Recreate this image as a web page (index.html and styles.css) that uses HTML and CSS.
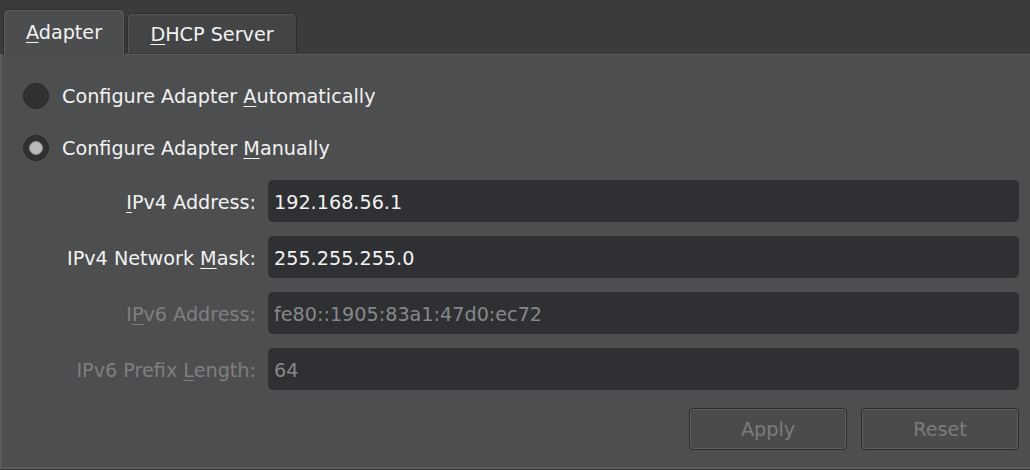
FILE: index.html
```html
<!DOCTYPE html>
<html>
<head>
<meta charset="utf-8">
<link rel="stylesheet" href="styles.css">
</head>
<body>
<div class="window">
  <div class="tabbar">
    <div class="tab active"><span><u>A</u>dapter</span></div>
    <div class="tab"><span><u>D</u>HCP Server</span></div>
  </div>
  <div class="panel">
    <div class="radio-row"><span class="radio"></span><span class="rlabel">Configure Adapter <u>A</u>utomatically</span></div>
    <div class="radio-row"><span class="radio checked"></span><span class="rlabel">Configure Adapter <u>M</u>anually</span></div>
    <div class="form">
      <label class="flabel"><span><u>I</u>Pv4 Address:</span></label>
      <div class="field"><span>192.168.56.1</span></div>
      <label class="flabel"><span>IPv4 Network <u>M</u>ask:</span></label>
      <div class="field"><span>255.255.255.0</span></div>
      <label class="flabel disabled"><span>I<u>P</u>v6 Address:</span></label>
      <div class="field disabled"><span>fe80::1905:83a1:47d0:ec72</span></div>
      <label class="flabel disabled"><span>IPv6 Prefix <u>L</u>ength:</span></label>
      <div class="field disabled"><span>64</span></div>
    </div>
    <div class="buttons">
      <div class="btn">Apply</div>
      <div class="btn">Reset</div>
    </div>
  </div>
</div>
</body>
</html>
```
FILE: styles.css
```css
* { box-sizing: border-box; }
html, body {
  margin: 0;
  padding: 0;
  background: #3a3b3d;
  width: 1030px;
  height: 470px;
  overflow: hidden;
}
body {
  font-family: "DejaVu Sans", Verdana, sans-serif;
  font-size: 19.2px;
  color: #f2f2f2;
}
u {
  text-decoration: underline;
  text-decoration-thickness: 1px;
  text-underline-offset: 3px;
}
.tabbar {
  height: 54px;
  display: flex;
  align-items: flex-end;
  padding-left: 3px;
  position: relative;
  z-index: 1;
}
.tab {
  height: 40px;
  padding: 2px 0 0;
  display: flex;
  align-items: center;
  background: #434446;
  border: 1px solid #2c2d2f;
  border-bottom: none;
  border-radius: 5px 5px 0 0;
  box-shadow: inset 1px 1px 0 #55565a;
  margin-bottom: 1px;
  width: 170px;
  justify-content: center;
}
.tab.active {
  height: 46px;
  width: 122px;
  margin-bottom: -1px;
  background: #4c4d4f;
  border-color: #2e2f31;
  box-shadow: inset 1px 1px 0 #5c5d60, inset -1px 0 0 #5c5d60;
  padding-top: 0;
  margin-right: 2px;
}
.panel {
  background: #4d4e50;
  border-top: 1px solid #5b5c5e;
  border-left: 2px solid #5a5b5d;
  border-bottom: 2px solid #5a5b5d;
  height: 415px;
  padding: 28px 11px 0 21px;
}
.radio-row {
  display: flex;
  align-items: center;
  height: 26px;
  gap: 13px;
  margin-bottom: 26px;
}
.radio {
  width: 26px;
  height: 26px;
  border-radius: 50%;
  background: #2f3032;
  border: 1px solid #29292b;
  display: flex;
  align-items: center;
  justify-content: center;
  flex: none;
}
.radio.checked::after {
  content: "";
  width: 12px;
  height: 12px;
  border-radius: 50%;
  background: #b9b9b9;
  border: 1px solid #8e8e8e;
}
.form {
  margin-top: -7px;
  display: grid;
  grid-template-columns: 233px 1fr;
  grid-auto-rows: 42px;
  column-gap: 12px;
  row-gap: 14px;
  align-items: stretch;
}
.flabel {
  height: 42px;
  display: flex;
  align-items: center;
  justify-content: flex-end;
  padding-top: 2px;
  white-space: nowrap;
}
.field {
  height: 42px;
  background: #2f3033;
  border-radius: 5px;
  padding-left: 6px;
  padding-top: 2px;
  display: flex;
  align-items: center;
}
.disabled {
  color: #7e7f80;
}
.field.disabled {
  color: #87888a;
}
.buttons {
  margin-top: 18px;
  display: flex;
  justify-content: flex-end;
  gap: 14px;
}
.btn {
  width: 158px;
  height: 42px;
  border: 1px solid #2b2c2e;
  border-radius: 4px;
  background: #4a4b4d;
  box-shadow: inset 0 0 0 1px #5e5f61;
  color: #7b7c7e;
  display: flex;
  align-items: center;
  justify-content: center;
}
```
